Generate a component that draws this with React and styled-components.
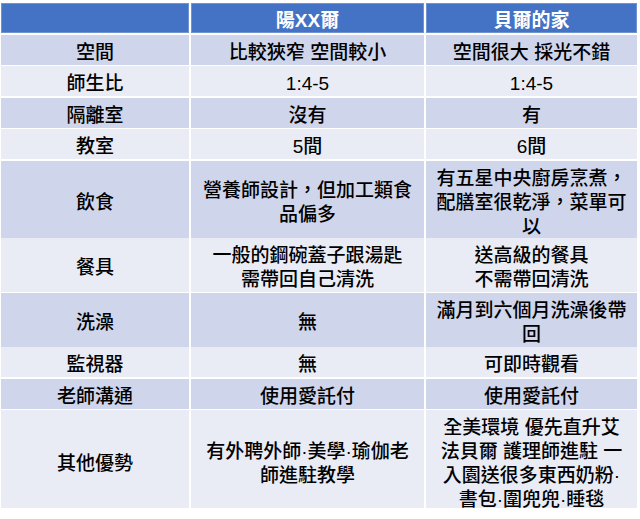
import React from 'react';
import styled, { createGlobalStyle } from 'styled-components';

const GlobalStyle = createGlobalStyle`
  html, body {
    margin: 0;
    padding: 0;
    background: #ffffff;
  }
  body {
    font-family: "Liberation Sans", "Noto Sans CJK TC", sans-serif;
  }
`;

const Table = styled.div`
  display: flex;
  flex-direction: column;
  gap: 2px;
  width: 636px;
  margin: 3px 0 0 1px;
`;

const Row = styled.div`
  display: grid;
  grid-template-columns: 188px 233px 211px;
  column-gap: 2px;
  height: ${p => p.h}px;
  margin-bottom: ${p => (p.head ? 1 : 0)}px;
`;

const Cell = styled.div`
  display: flex;
  align-items: center;
  justify-content: center;
  text-align: center;
  padding: 6px 8px 0;
  box-sizing: border-box;
  font-size: 19px;
  line-height: 24px;
  font-weight: 500;
  color: #000000;
  background: ${p => (p.band ? '#CFD5EA' : '#E9EBF5')};
`;

const HeadCell = styled(Cell)`
  background: #4472C4;
  color: #ffffff;
  font-weight: 700;
  box-shadow: inset 0 0 0 1px #6f93d3;
`;

const rows = [
  { h: 29, label: '空間', a: ['比較狹窄 空間較小'], b: ['空間很大 採光不錯'] },
  { h: 30, label: '師生比', a: ['1:4-5'], b: ['1:4-5'] },
  { h: 29, label: '隔離室', a: ['沒有'], b: ['有'] },
  { h: 30, label: '教室', a: ['5間'], b: ['6間'] },
  {
    h: 75,
    label: '飲食',
    a: ['營養師設計，但加工類食', '品偏多'],
    b: ['有五星中央廚房烹煮，', '配膳室很乾淨，菜單可', '以'],
  },
  {
    h: 53,
    label: '餐具',
    a: ['一般的鋼碗蓋子跟湯匙', '需帶回自己清洗'],
    b: ['送高級的餐具', '不需帶回清洗'],
  },
  { h: 52, label: '洗澡', a: ['無'], b: ['滿月到六個月洗澡後帶', '回'] },
  { h: 30, label: '監視器', a: ['無'], b: ['可即時觀看'] },
  { h: 29, label: '老師溝通', a: ['使用愛託付'], b: ['使用愛託付'] },
  {
    h: 98,
    label: '其他優勢',
    a: ['有外聘外師·美學·瑜伽老', '師進駐教學'],
    b: ['全美環境 優先直升艾', '法貝爾 護理師進駐 一', '入園送很多東西奶粉·', '書包·圍兜兜·睡毯'],
  },
];

const Lines = ({ lines }) => (
  <span>
    {lines.map((l, i) => (
      <React.Fragment key={i}>
        {i > 0 && <br />}
        {l}
      </React.Fragment>
    ))}
  </span>
);

export default function App() {
  return (
    <>
      <GlobalStyle />
      <Table>
        <Row h={29} head>
          <HeadCell />
          <HeadCell>陽XX爾</HeadCell>
          <HeadCell>貝爾的家</HeadCell>
        </Row>
        {rows.map((r, i) => {
          const band = i % 2 === 0;
          return (
            <Row key={r.label} h={r.h}>
              <Cell band={band}>{r.label}</Cell>
              <Cell band={band}><Lines lines={r.a} /></Cell>
              <Cell band={band}><Lines lines={r.b} /></Cell>
            </Row>
          );
        })}
      </Table>
    </>
  );
}
